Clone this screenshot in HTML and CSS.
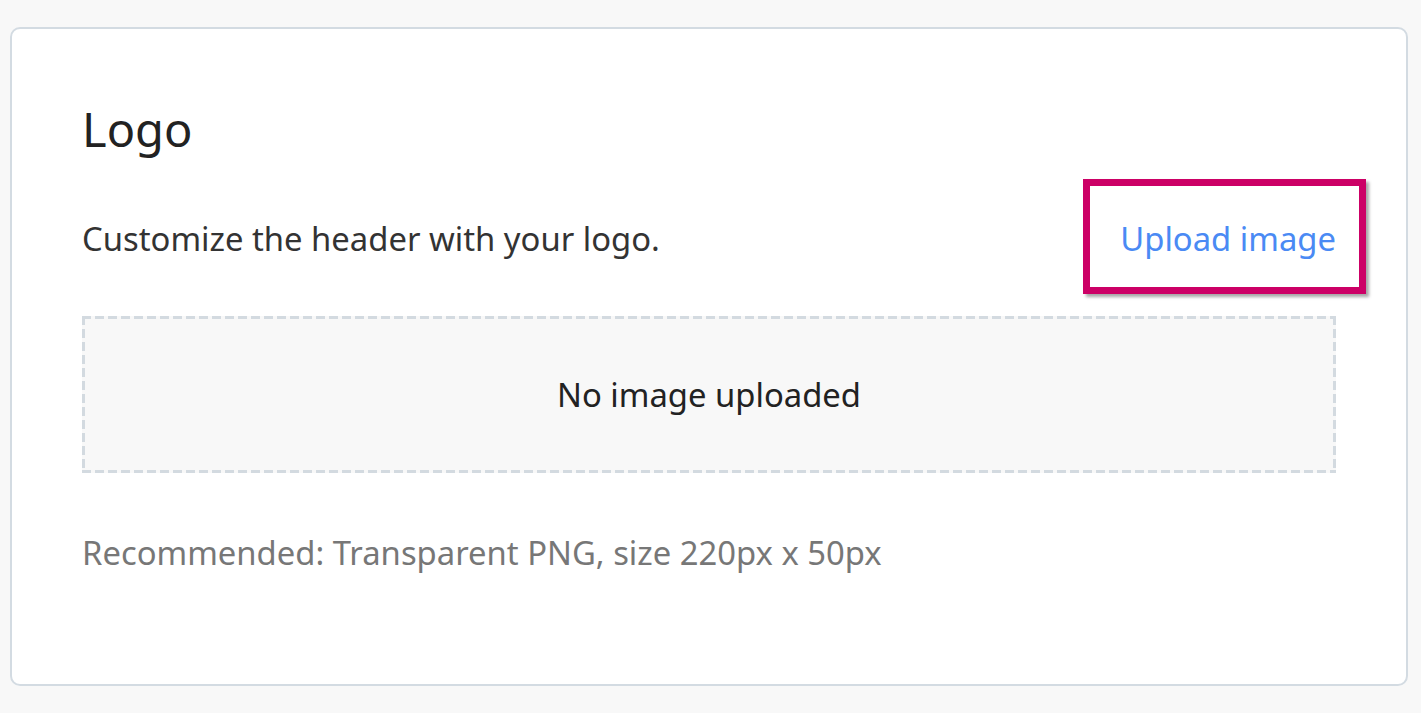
FILE: index.html
```html
<!DOCTYPE html>
<html>
<head>
<meta charset="utf-8">
<link rel="stylesheet" href="styles.css">
</head>
<body>
<div class="card">
  <h2 class="title">Logo</h2>
  <div class="row">
    <p class="desc">Customize the header with your logo.</p>
    <a class="upload" href="#">Upload image</a>
  </div>
  <div class="dropzone">No image uploaded</div>
  <p class="hint">Recommended: Transparent PNG, size 220px x 50px</p>
</div>
</body>
</html>
```
FILE: styles.css
```css
html, body {
  margin: 0;
  padding: 0;
  background: #f8f8f8;
}
body {
  font-family: "Noto Sans", "Open Sans", sans-serif;
  padding: 27px 13px 0 10px;
}
.card {
  box-sizing: border-box;
  height: 659px;
  background: #fff;
  border: 2px solid #d3dbe2;
  border-radius: 10px;
  padding: 68px 70px 0 70px;
}
.title {
  margin: 0;
  font-size: 47px;
  font-weight: 400;
  line-height: 64px;
  color: #222;
}
.row {
  display: flex;
  justify-content: space-between;
  align-items: center;
  margin-top: 58px;
}
.desc {
  margin: 0;
  font-size: 32.8px;
  line-height: 40px;
  color: #333;
}
.upload {
  position: relative;
  font-size: 32.8px;
  line-height: 40px;
  color: #4a8af4;
  text-decoration: none;
}
.upload::after {
  content: "";
  position: absolute;
  left: -37px;
  right: -30px;
  top: -40px;
  bottom: -35px;
  border: 7px solid #cc0066;
  box-shadow: 3px 3px 3px rgba(0,0,0,0.35);
}
.dropzone {
  margin-top: 57px;
  height: 157px;
  background:
    repeating-linear-gradient(90deg, #d3dae0 0 9px, transparent 9px 13px) left top / 100% 3px no-repeat,
    repeating-linear-gradient(90deg, #d3dae0 0 9px, transparent 9px 13px) left bottom / 100% 3px no-repeat,
    repeating-linear-gradient(180deg, #d3dae0 0 9px, transparent 9px 13px) left top / 3px 100% no-repeat,
    repeating-linear-gradient(180deg, #d3dae0 0 9px, transparent 9px 13px) right top / 3px 100% no-repeat,
    #f8f8f8;
  display: flex;
  align-items: center;
  justify-content: center;
  font-size: 32.8px;
  color: #222;
}
.hint {
  margin: 60px 0 0 0;
  font-size: 32.8px;
  line-height: 40px;
  color: #777;
}
```
